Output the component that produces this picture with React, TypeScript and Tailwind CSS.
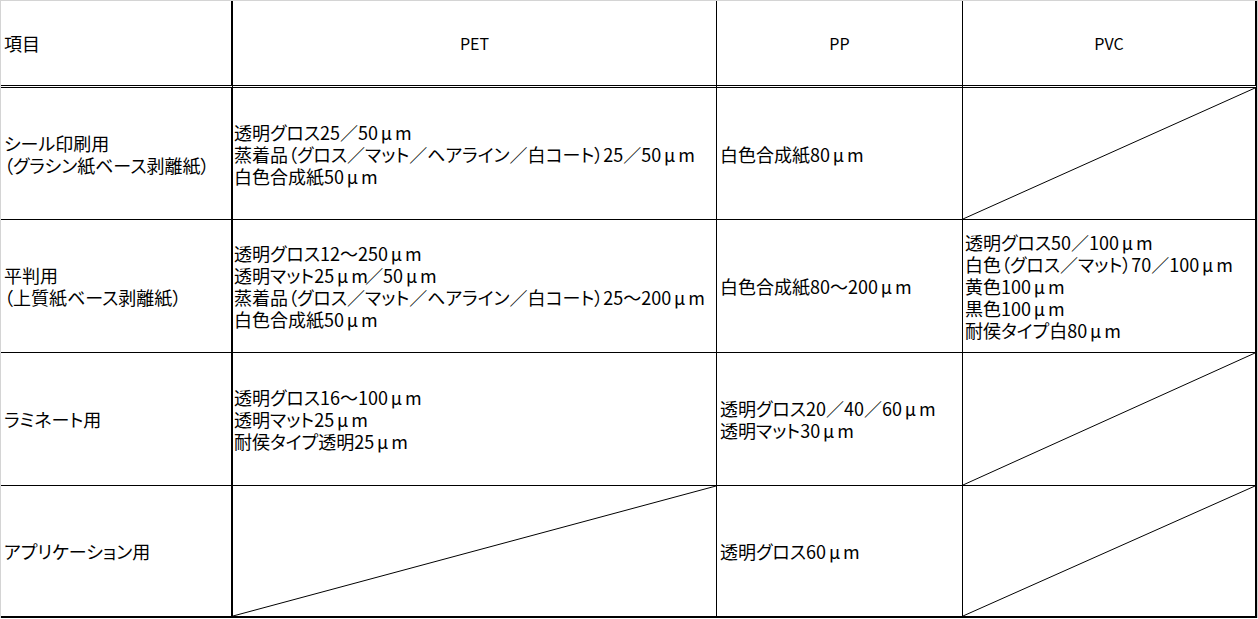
import React from 'react';

type Row = {
  label: string[];
  pet: string[] | null;
  pp: string[] | null;
  pvc: string[] | null;
};

const rows: Row[] = [
  {
    label: ['シール印刷用', '（グラシン紙ベース剥離紙）'],
    pet: ['透明グロス25／50μｍ', '蒸着品（グロス／マット／ヘアライン／白コート）25／50μｍ', '白色合成紙50μｍ'],
    pp: ['白色合成紙80μｍ'],
    pvc: null,
  },
  {
    label: ['平判用', '（上質紙ベース剥離紙）'],
    pet: [
      '透明グロス12～250μｍ',
      '透明マット25μｍ／50μｍ',
      '蒸着品（グロス／マット／ヘアライン／白コート）25～200μｍ',
      '白色合成紙50μｍ',
    ],
    pp: ['白色合成紙80～200μｍ'],
    pvc: ['透明グロス50／100μｍ', '白色（グロス／マット）70／100μｍ', '黄色100μｍ', '黒色100μｍ', '耐侯タイプ白80μｍ'],
  },
  {
    label: ['ラミネート用'],
    pet: ['透明グロス16～100μｍ', '透明マット25μｍ', '耐侯タイプ透明25μｍ'],
    pp: ['透明グロス20／40／60μｍ', '透明マット30μｍ'],
    pvc: null,
  },
  {
    label: ['アプリケーション用'],
    pet: null,
    pp: ['透明グロス60μｍ'],
    pvc: null,
  },
];

const Slash = () => (
  <svg className="absolute inset-0 h-full w-full" preserveAspectRatio="none" viewBox="0 0 100 100">
    <line x1="0" y1="100" x2="100" y2="0" stroke="#000" strokeWidth="1" vectorEffect="non-scaling-stroke" />
  </svg>
);

// μｍ is spaced out like the old bitmap font
const Text = ({ t }: { t: string }) => {
  const parts = t.split('μｍ');
  return (
    <span className="whitespace-nowrap">
      {parts.map((p, i) => (
        <React.Fragment key={i}>
          {p}
          {i < parts.length - 1 && (
            <>
              <span className="inline-block w-[17px] text-center">μ</span>
              <span className="inline-block w-[14px] text-right">m</span>
            </>
          )}
        </React.Fragment>
      ))}
    </span>
  );
};

const Lines = ({ items }: { items: string[] }) => (
  <div className="flex flex-col">
    {items.map((t) => (
      <Text key={t} t={t} />
    ))}
  </div>
);

export default function App() {
  return (
    <div className="w-[1258px] h-[619px] bg-white font-['Noto_Sans_CJK_JP',sans-serif] text-[18px] leading-[22px] text-black [font-feature-settings:'palt']">
      <div className="border-l border-t border-r border-[#d4d4d4] w-[1258px]">
        <div className="grid grid-cols-[232px_484px_246px_294px] grid-rows-[87px_132px_133px_133px_132px]">
          {/* header */}
          <div className="flex items-center pl-[3px] border-r-2 border-b-[3px] border-double border-black">
            項目
          </div>
          <div className="flex items-center justify-center text-[16px] border-r border-b-[3px] border-double border-black">PET</div>
          <div className="flex items-center justify-center text-[16px] border-r border-b-[3px] border-double border-black">PP</div>
          <div className="flex items-center justify-center text-[16px] border-r-2 border-b-[3px] border-double border-black">PVC</div>

          {rows.map((r, i) => {
            const last = i === rows.length - 1;
            const bottom = last ? 'border-b-2' : 'border-b';
            return (
              <React.Fragment key={i}>
                <div className={`flex items-center pl-[3px] border-r-2 border-black ${bottom}`}>
                  <Lines items={r.label} />
                </div>
                <div className={`relative flex items-center pl-[1px] border-r border-black ${bottom}`}>
                  {r.pet ? <Lines items={r.pet} /> : <Slash />}
                </div>
                <div className={`relative flex items-center pl-[3px] border-r border-black ${bottom}`}>
                  {r.pp ? <Lines items={r.pp} /> : <Slash />}
                </div>
                <div className={`relative flex items-center pl-[2px] border-r-2 border-black ${bottom}`}>
                  {r.pvc ? <Lines items={r.pvc} /> : <Slash />}
                </div>
              </React.Fragment>
            );
          })}
        </div>
      </div>
    </div>
  );
}
